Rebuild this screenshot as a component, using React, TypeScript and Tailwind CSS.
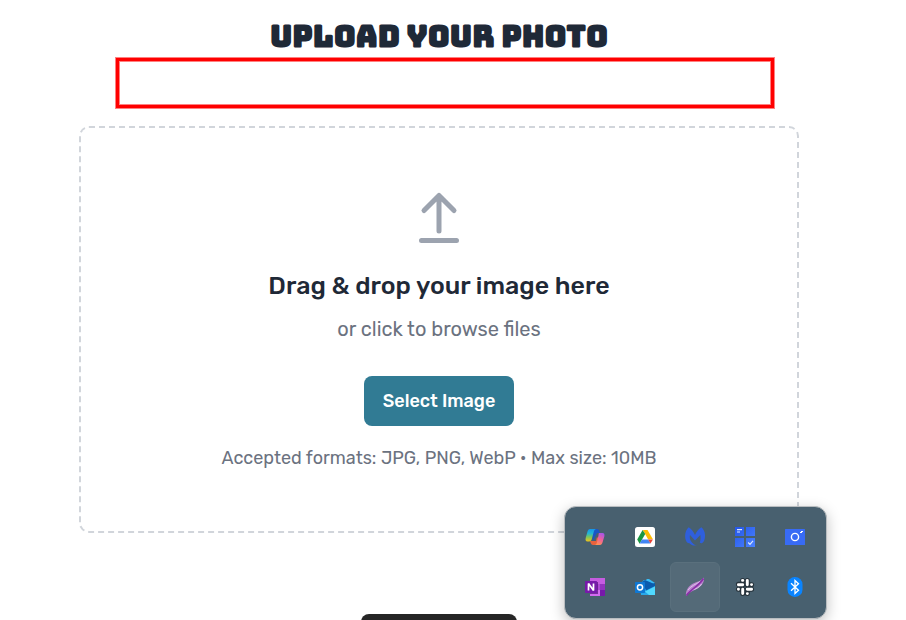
import type { ReactNode } from "react";

function UploadIcon() {
  return (
    <svg className="h-16 w-16 text-[#9ca3af]" viewBox="0 0 64 64" fill="none" stroke="currentColor" strokeWidth="5" strokeLinecap="round" strokeLinejoin="round" aria-hidden="true">
      <path d="M32 45V9.500M17 24.500 32 9.500l15 15M14.500 54.500h35" />
    </svg>
  );
}

function Icon({ children }: { children: ReactNode }) {
  return (
    <svg className="h-5 w-5" viewBox="0 0 20 20" aria-hidden="true">
      {children}
    </svg>
  );
}

const apps: { name: string; active?: boolean; icon: ReactNode }[] = [
  {
    name: "Copilot",
    icon: (
      <Icon>
        <defs>
          <linearGradient id="cpA" x1="0" y1="0" x2="0" y2="1">
            <stop offset="0" stopColor="#1795e8" />
            <stop offset=".35" stopColor="#22b5d6" />
            <stop offset=".65" stopColor="#7dc65a" />
            <stop offset="1" stopColor="#f2c21a" />
          </linearGradient>
          <linearGradient id="cpB" x1=".7" y1="0" x2=".3" y2="1">
            <stop offset="0" stopColor="#a855e8" />
            <stop offset=".5" stopColor="#f0609a" />
            <stop offset="1" stopColor="#ff9350" />
          </linearGradient>
        </defs>
        <path fill="#1b55c4" d="M6 2h6c1.500 0 2.200 1 2.600 2.400L15 6h-3L8 14z" />
        <path fill="#e9623d" d="M5 14h6l1-4 2 2-1 4c-.5 1.500-1.300 2-2.500 2H8c-1.500 0-2-1-2.500-2.500z" />
        <path fill="url(#cpA)" d="M5 2h6c-1.300.4-1.900 1.500-2.300 3L6.800 12c-.4 1.400-1.100 2.500-2.800 2.500H2.500C.7 14.500.2 13 .7 11L2.500 4.500C3 3 3.700 2 5 2z" />
        <path fill="url(#cpB)" d="M14 6h3.500c1.800 0 2.300 1.500 1.800 3.500l-1.800 6c-.5 1.500-1.200 2.500-2.500 2.500h-5c1.300-.4 1.700-1.500 2-3l1.500-6.500C13.800 7 13.500 6.500 14 6z" />
      </Icon>
    ),
  },
  {
    name: "Google Drive",
    icon: (
      <Icon>
        <rect width="20" height="20" rx="2.500" fill="#fff" />
        <path fill="#fbbc04" d="M7.800 3h4.700l5.400 9.300h-4.800z" />
        <path fill="#1a9641" d="M7.600 3 2.200 12.500 4.600 16.700 10.200 7z" />
        <path fill="#4285f4" d="M7 12.400h6.200l2.300 4.200H4.600z" />
        <path fill="#ea4335" d="M13.100 12.400h4.800l-2.400 4.200z" />
      </Icon>
    ),
  },
  {
    name: "Malwarebytes",
    icon: (
      <Icon>
        <path fill="#2f5fdc" d="M3.700.3C5.800 1.500 8.500 4.500 10 8c1.500-3.500 4.200-6.500 6.300-7.700C18.500 2 20.300 5.500 20 9.500c-.2 3-1 5.500-2.800 6.500-1 .5-2 .1-2.400-.5.800-2.500 1-4.500.5-7.500L10 13.500 5 8c-.8 3.500.4 6.500 3.800 9.200 1 .7 2.200.8 3.200.8-2.500 1-5.500.4-7.500-1.800-1.700.2-2.900-1-3.700-3C-.7 9 .3 3 3.700.3z" />
      </Icon>
    ),
  },
  {
    name: "Tasks",
    icon: (
      <Icon>
        <defs>
          <linearGradient id="tile" x1="0" y1="0" x2="1" y2="1">
            <stop stopColor="#2456e8" />
            <stop offset="1" stopColor="#4b83ff" />
          </linearGradient>
        </defs>
        <path fill="url(#tile)" d="M0 0h9v9H0zM11 0h9v9h-9zM0 11h9v9H0zM11 11h9v9h-9z" />
        <path stroke="#dce8ff" strokeWidth="1.200" fill="none" d="M2 2.600h5M2 5h3M13.200 15.500l1.800 1.800 3-3.500" />
      </Icon>
    ),
  },
  {
    name: "Screen capture",
    icon: (
      <Icon>
        <rect y="2" width="20" height="16" rx=".5" fill="#386bf5" />
        <circle cx="10" cy="10" r="3.600" fill="none" stroke="#fff" strokeWidth="1.400" />
        <path stroke="#fff" strokeWidth="1.200" d="M15 5.500h2M16 4.500h2" />
      </Icon>
    ),
  },
  {
    name: "OneNote",
    icon: (
      <Icon>
        <path fill="#c55ce0" d="M5 1h15v6H5z" />
        <path fill="#ae4bd5" d="M5 7h15v6H5z" />
        <path fill="#9333bd" d="M15 7h5v6h-5z" />
        <path fill="#7719aa" d="M15 13h5v6h-5z" />
        <path fill="#d36af0" d="M5 13h10v6H5z" />
        <path fill="#3b0764" opacity=".6" d="M5 5h8v12H5z" />
        <rect y="4" width="12" height="12" rx=".7" fill="#7719aa" />
        <path d="M3.500 13.500v-7l5 7v-7" fill="none" stroke="#fff" strokeWidth="1.700" strokeLinejoin="bevel" />
      </Icon>
    ),
  },
  {
    name: "Outlook",
    icon: (
      <Icon>
        <path fill="#38bdf8" d="M9 3h2l1-1h2l6 4-8 5-6-5z" />
        <path fill="#0b5cad" d="m5 6 5-3 7 3 3 1v5H5z" />
        <path fill="#28a8ea" d="m5 10 7 2 8-5v11H6z" />
        <path fill="#0b5cad" d="M10 10.500 20 6v3l-9 4.500z" />
        <path fill="#50d9ff" d="m20 9.500-10 5 4 3.500h6z" />
        <rect y="5" width="10" height="11" rx=".7" fill="#0f78d4" />
        <circle cx="5" cy="10.300" r="2.600" fill="none" stroke="#fff" strokeWidth="1.500" />
      </Icon>
    ),
  },
  {
    name: "Feather notes",
    active: true,
    icon: (
      <Icon>
        <path fill="#b884cd" d="M19 .5c.5 4-1.500 7.500-5 10C10 13.500 5 14 1 19 .5 15 2 10.500 6.500 7.500 11 4.500 16 4.500 19 .5z" />
        <path fill="none" stroke="#dcc3e8" strokeWidth="1" d="M3 13C6 8.500 11 7.500 15 4.500M7 13c4-1 8-3 9.500-6" />
        <path fill="none" stroke="#8a2fa8" strokeWidth="1.700" d="M1.500 18.500C6 12 14 9 18.500 1.500" />
      </Icon>
    ),
  },
  {
    name: "Slack",
    icon: (
      <Icon>
        <g fill="none" strokeLinecap="round">
          <path stroke="#26323b" strokeWidth="5" d="M7.700 3.400v3.800H3.400M12.300 3.400v4.300M12.300 7.700h4.300M7.700 12.300v4.300M3.400 12.300h4.300M12.300 12.700v3.900M12.300 12.300h4.300" />
          <path stroke="#fff" strokeWidth="2.900" d="M12.300 3.400v4.300M16.600 12.300h-4.300M7.700 16.600v-4.300M3.400 7.700h4.300M7.500 3.400h.3M16.500 7.600h.1M12.300 16.600h.1M3.400 12.300h.1" />
        </g>
      </Icon>
    ),
  },
  {
    name: "Bluetooth",
    icon: (
      <Icon>
        <rect x="2.500" width="15" height="20" rx="7.300" fill="#0a84ff" />
        <path fill="none" stroke="#fff" strokeWidth="1.300" d="m6 6.300 7.500 7L10 16.500v-13l3.500 3.200-7.500 7" />
      </Icon>
    ),
  },
];

function Tray() {
  return (
    <aside aria-label="System tray" className="fixed right-[79px] bottom-px grid grid-cols-5 rounded-xl border border-[#b9bdc0] bg-[#48606f] pt-[5px] pr-[6px] pb-[6px] pl-[5px] shadow-[0_4px_14px_rgba(0,0,0,0.25)]">
      {apps.map((app) => (
        <button
          key={app.name}
          type="button"
          aria-label={app.name}
          className={`flex size-[50px] items-center justify-center rounded-md border ${app.active ? "border-[#5a707d] bg-[#546a78]" : "border-transparent"}`}
        >
          {app.icon}
        </button>
      ))}
    </aside>
  );
}

export default function App() {
  return (
    <div className="h-screen overflow-hidden bg-white pr-7 font-['Rubik','Roboto',sans-serif]">
      <main className="mx-auto flex max-w-[720px] flex-col pt-4">
        <h1 className="text-center font-['Bungee','Inter',sans-serif] text-[30px] leading-10 font-black text-[#1f2937]">UPLOAD YOUR PHOTO</h1>
        <div className="mt-[2px] mr-[25px] ml-[37px] h-[50px] border-[3px] border-[#ff0000] ring-1 ring-[#ff8080] inset-ring inset-ring-[#ff8080]" />
        <section className="mt-[18px] flex flex-col items-center rounded-[10px] border-2 border-dashed border-[#d1d5db] px-12 pt-[58px] pb-[61px] text-center">
          <UploadIcon />
          <h2 className="mt-5 text-[25px] leading-8 font-medium text-[#1f2937]">Drag &amp; drop your image here</h2>
          <p className="mt-3 text-[20px] leading-[30px] text-[#6b7280]">or click to browse files</p>
          <button type="button" className="mt-8 h-[50px] w-[150px] rounded-lg bg-[#317b94] text-[18px] leading-6 font-medium text-white">
            Select Image
          </button>
          <p className="mt-5 text-[18px] leading-6 text-[#6b7280]">Accepted formats: JPG, PNG, WebP • Max size: 10MB</p>
        </section>
        <button type="button" aria-label="Continue" className="mt-[81px] h-12 w-[156px] shrink-0 self-center rounded-lg bg-[#262626]" />
      </main>
      <Tray />
    </div>
  );
}
